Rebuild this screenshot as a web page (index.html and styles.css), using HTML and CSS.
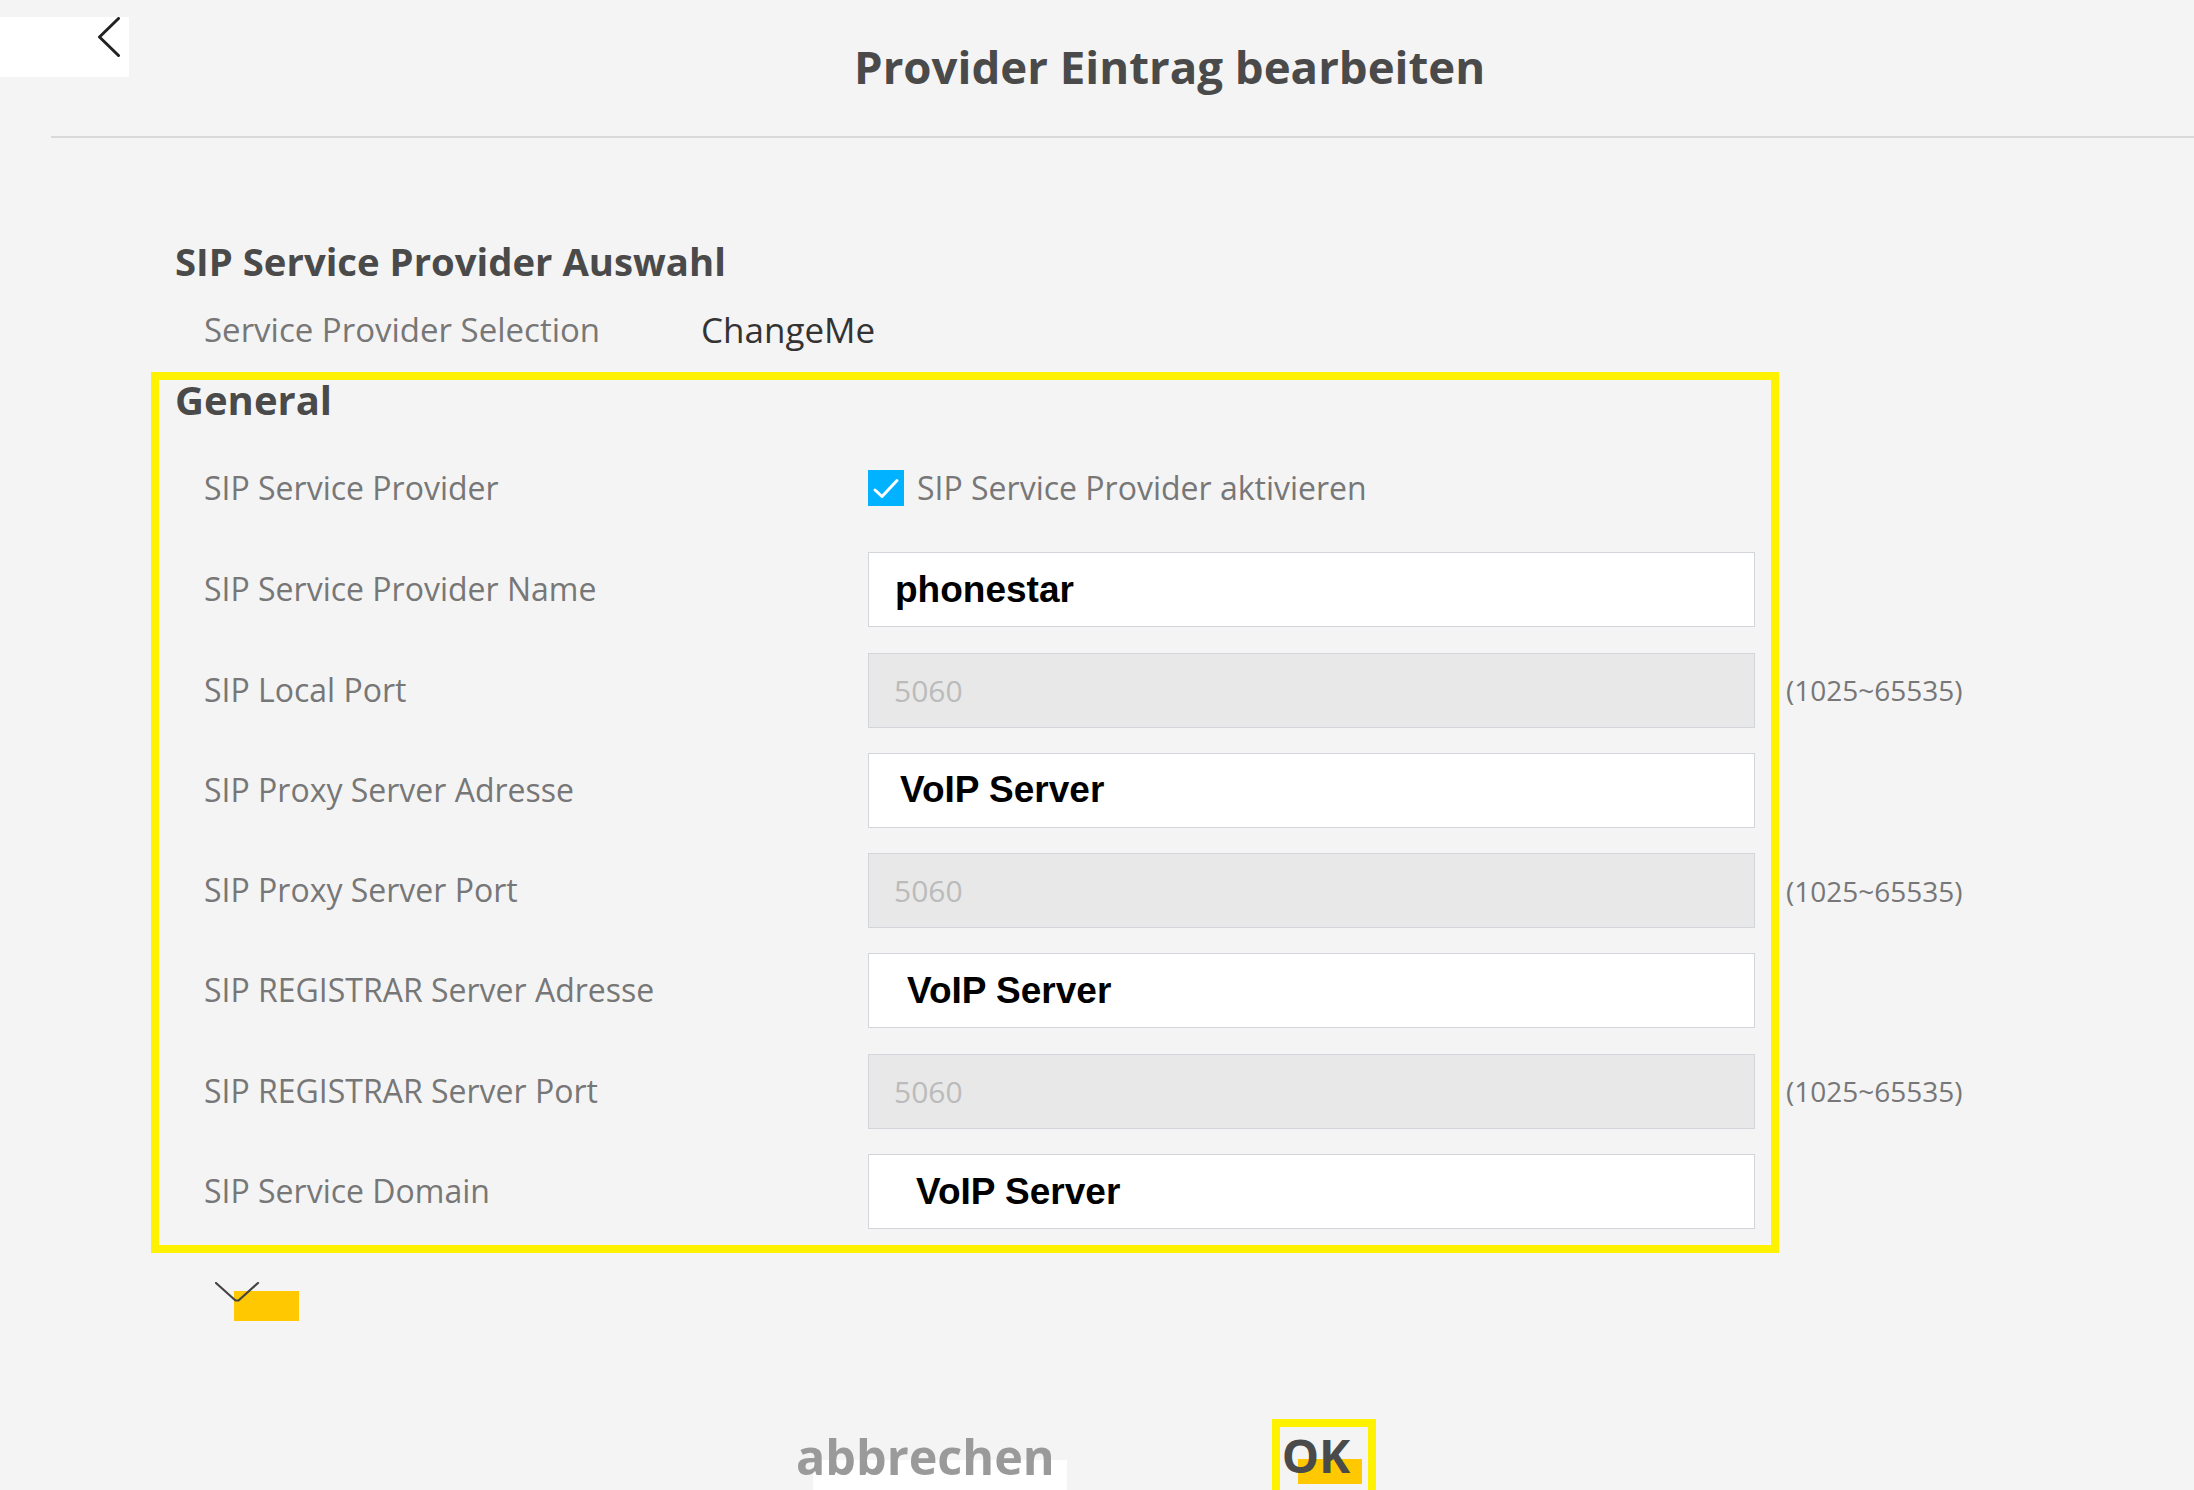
FILE: index.html
```html
<!DOCTYPE html>
<html lang="de">
<head>
    <meta charset="UTF-8">
    <meta name="viewport" content="width=device-width, initial-scale=1.0">
    <title>Provider Eintrag bearbeiten</title>
    <link rel="stylesheet" href="styles.css">
</head>
<body>
    <div class="page">
        <header class="top-bar">
            <a class="back" href="#" title="Zurück">
                <svg width="129" height="60" viewBox="0 0 129 60">
                    <polyline points="118.5,1.5 99.5,20 118.5,38.5" fill="none" stroke="#222" stroke-width="3" stroke-linecap="round" stroke-linejoin="round"/>
                </svg>
            </a>
            <h1 class="page-title">Provider Eintrag bearbeiten</h1>
        </header>

        <main class="content">
            <h2 class="section-title">SIP Service Provider Auswahl</h2>
            <div class="select-row">
                <span class="label select-label">Service Provider Selection</span>
                <span class="select-value">ChangeMe</span>
            </div>

            <section class="general">
                <h2 class="section-title general-title">General</h2>
                <div class="form-grid">
                    <span class="label">SIP Service Provider</span>
                    <label class="check">
                        <span class="check-box">
                            <svg width="36" height="36" viewBox="0 0 36 36">
                                <polyline points="7,20 14,26.5 29,10.5" fill="none" stroke="#fff" stroke-width="3" stroke-linecap="round" stroke-linejoin="round"/>
                            </svg>
                        </span>
                        SIP Service Provider aktivieren
                    </label>
                    <span></span>

                    <span class="label">SIP Service Provider Name</span>
                    <input class="field" type="text" value="phonestar">
                    <span></span>

                    <span class="label">SIP Local Port</span>
                    <input class="field" type="text" value="5060" disabled>
                    <span class="note">(1025~65535)</span>

                    <span class="label">SIP Proxy Server Adresse</span>
                    <input class="field indent-1" type="text" value="VoIP Server">
                    <span></span>

                    <span class="label">SIP Proxy Server Port</span>
                    <input class="field" type="text" value="5060" disabled>
                    <span class="note">(1025~65535)</span>

                    <span class="label">SIP REGISTRAR Server Adresse</span>
                    <input class="field indent-2" type="text" value="VoIP Server">
                    <span></span>

                    <span class="label">SIP REGISTRAR Server Port</span>
                    <input class="field" type="text" value="5060" disabled>
                    <span class="note">(1025~65535)</span>

                    <span class="label">SIP Service Domain</span>
                    <input class="field indent-3" type="text" value="VoIP Server">
                    <span></span>
                </div>
            </section>

            <div class="more">
                <span class="more-mark"></span>
                <svg class="more-icon" width="45" height="21" viewBox="0 0 45 21">
                    <polyline points="1,1 20.5,18.5 23.5,18.5 43,1" fill="none" stroke="#444" stroke-width="2.2" stroke-linecap="round" stroke-linejoin="round"/>
                </svg>
            </div>
        </main>

        <footer class="actions">
            <button class="btn cancel" type="button">abbrechen</button>
            <button class="btn ok" type="button"><span class="ok-mark"></span><span class="ok-text">OK</span></button>
        </footer>
    </div>
</body>
</html>
```

FILE: styles.css
```css
html, body {
    margin: 0;
    padding: 0;
    height: 1490px;
    overflow: hidden;
}

body {
    font-family: "Open Sans", Arial, sans-serif;
    background-color: #f4f4f4;
    color: #4a4a4a;
}

.page {
    height: 1490px;
    overflow: hidden;
}

/* Kopfzeile */
.top-bar {
    display: flex;
    align-items: flex-start;
    margin-left: 51px;
    height: 136px;
    border-bottom: 2px solid #d9d9d9;
}

.back {
    display: block;
    margin-left: -51px;
    margin-top: 17px;
    width: 129px;
    height: 60px;
    background-color: #fff;
}

.back svg {
    display: block;
}

.page-title {
    margin: 40px 0 0 725px;
    font-size: 45.6px;
    line-height: 52px;
    font-weight: 700;
    color: #4a4a4a;
}

/* Inhalt */
.content {
    padding-left: 151px;
}

.section-title {
    margin: 100px 0 0 24px;
    font-size: 38.3px;
    line-height: 46px;
    font-weight: 700;
    color: #4a4a4a;
}

.label {
    font-size: 32px;
    color: #777;
}

.select-row {
    display: flex;
    align-items: center;
    height: 46px;
    margin: 22px 0 0 53px;
}

.select-label {
    width: 497px;
    font-size: 33px;
}

.select-value {
    font-size: 35px;
    color: #333;
}

.general {
    margin-top: 20px;
    width: 1612px;
    border: 8px solid #fff200;
    padding: 1px 0 16px 0;
}

.general-title {
    margin: 0 0 0 16px;
    font-size: 40px;
    line-height: 38px;
}

.form-grid {
    display: grid;
    grid-template-columns: 664px 887px auto;
    grid-template-rows: 77px;
    grid-auto-rows: 75px;
    row-gap: 25.3px;
    align-items: center;
    margin: 31px 0 0 45px;
}

.form-grid > .label {
    margin-top: -2px;
}

.check {
    display: flex;
    align-items: center;
    gap: 13px;
    font-size: 32px;
    color: #777;
    margin-bottom: 2px;
}

.check-box {
    display: block;
    width: 36px;
    height: 36px;
    background-color: #00b2ff;
}

.check-box svg {
    display: block;
}

.field {
    box-sizing: border-box;
    height: 75px;
    width: 887px;
    margin: 0;
    padding: 0 0 0 26px;
    border: 1.5px solid #d2d6da;
    background-color: #fff;
    font-family: "Liberation Sans", Arial, sans-serif;
    font-size: 37px;
    font-weight: 700;
    color: #000;
    outline: none;
}

.field.indent-1 {
    padding-left: 31px;
}

.field.indent-2 {
    padding-left: 38px;
}

.field.indent-3 {
    padding-left: 47px;
}

.field:disabled {
    background-color: #e8e8e8;
    font-family: "Open Sans", Arial, sans-serif;
    font-size: 30px;
    font-weight: 400;
    color: #bbb;
    padding-left: 25px;
}

.note {
    margin-left: 31px;
    white-space: nowrap;
    font-size: 28px;
    color: #777;
}

/* Aufklappen */
.more {
    position: relative;
    width: 45px;
    height: 21px;
    margin: 29px 0 0 64px;
}

.more-mark {
    position: absolute;
    left: 19px;
    top: 9px;
    width: 65px;
    height: 30px;
    background-color: #ffc800;
}

.more-icon {
    position: relative;
    display: block;
}

/* Schaltflächen */
.actions {
    display: flex;
    align-items: flex-start;
    margin-top: 116px;
    padding-left: 796px;
    gap: 217px;
}

.btn {
    font-family: "Open Sans", Arial, sans-serif;
    font-size: 46px;
    line-height: 46px;
    font-weight: 700;
    background: none;
    border: none;
    padding: 0;
    cursor: pointer;
}

.cancel {
    position: relative;
    z-index: 0;
    margin-top: 14px;
    font-size: 48.5px;
    color: #9a9a9a;
}

.cancel::before {
    content: "";
    position: absolute;
    z-index: -1;
    left: 17px;
    top: 27px;
    width: 254px;
    height: 40px;
    background-color: #fff;
}

.ok {
    position: relative;
    z-index: 0;
    border: 8px solid #fff200;
    padding: 5px 18px 24px 2px;
    font-size: 47px;
    color: #4a4a4a;
}

.ok-mark {
    position: absolute;
    z-index: -1;
    left: 18px;
    top: 32px;
    width: 64px;
    height: 25px;
    background-color: #ffc800;
}

.ok-text {
    display: block;
}
```
